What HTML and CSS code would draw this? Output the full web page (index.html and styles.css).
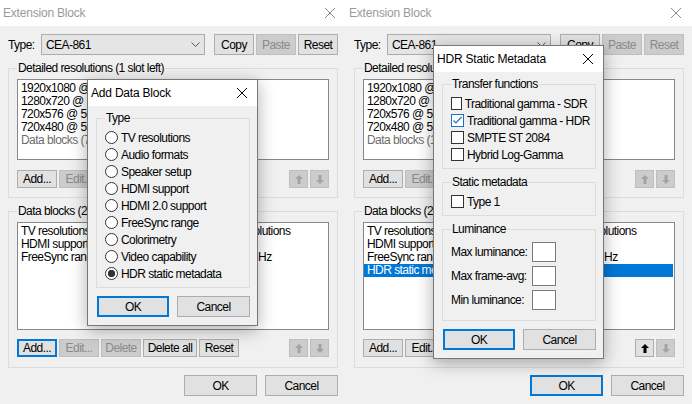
FILE: index.html
```html
<!DOCTYPE html>
<html lang="en">

<head>
    <meta charset="UTF-8">
    <title>Extension Block</title>
    <link rel="stylesheet" href="styles.css">
</head>

<body>
    <div class="screen">

        <!-- Left: Extension Block with Add Data Block on top -->
        <div class="window">
            <div class="titlebar inactive">
                <span>Extension Block</span>
                <svg class="close" width="10" height="10" viewBox="0 0 10 10"><path d="M0 0L10 10M10 0L0 10" /></svg>
            </div>
            <div class="client">
                <div class="type-row">
                    <span class="label">Type:</span>
                    <div class="combo">
                        <span>CEA-861</span>
                        <svg width="9" height="5" viewBox="0 0 9 5"><path d="M0.5 0.5L4.5 4.5L8.5 0.5" /></svg>
                    </div>
                    <div class="top-buttons">
                        <button>Copy</button>
                        <button disabled>Paste</button>
                        <button>Reset</button>
                    </div>
                </div>

                <fieldset class="group">
                    <legend>Detailed resolutions (1 slot left)</legend>
                    <div class="listbox list-detailed">
                        <div class="item">1920x1080 @ 60 Hz</div>
                        <div class="item">1280x720 @ 59.940 Hz</div>
                        <div class="item">720x576 @ 50 Hz</div>
                        <div class="item">720x480 @ 59.940 Hz</div>
                        <div class="item dim">Data blocks (74 bytes left)</div>
                    </div>
                    <div class="btn-row">
                        <button>Add...</button>
                        <button disabled>Edit...</button>
                        <span class="spacer"></span>
                        <button class="arrow" disabled><svg width="8" height="9" viewBox="0 0 8 9"><path d="M4 0L8 4H5.5V9H2.5V4H0Z" /></svg></button>
                        <button class="arrow" disabled><svg width="8" height="9" viewBox="0 0 8 9"><path d="M4 9L8 5H5.5V0H2.5V5H0Z" /></svg></button>
                    </div>
                </fieldset>

                <fieldset class="group blocks">
                    <legend>Data blocks (26 bytes used)</legend>
                    <div class="listbox list-blocks">
                        <div class="item">TV resolutions: 13 native, 1080p, 720p, 480p resolutions</div>
                        <div class="item">HDMI support: 30/36-bit color, 300 MHz</div>
                        <div class="item">FreeSync range: minimum 48 Hz, maximum 144 Hz</div>
                    </div>
                    <div class="btn-row">
                        <button class="focus">Add...</button>
                        <button disabled>Edit...</button>
                        <button disabled>Delete</button>
                        <button class="wide">Delete all</button>
                        <button>Reset</button>
                        <span class="spacer"></span>
                        <button class="arrow" disabled><svg width="8" height="9" viewBox="0 0 8 9"><path d="M4 0L8 4H5.5V9H2.5V4H0Z" /></svg></button>
                        <button class="arrow" disabled><svg width="8" height="9" viewBox="0 0 8 9"><path d="M4 9L8 5H5.5V0H2.5V5H0Z" /></svg></button>
                    </div>
                </fieldset>

                <div class="footer">
                    <button>OK</button>
                    <button>Cancel</button>
                </div>
            </div>

            <div class="dialog add-dialog">
                <div class="titlebar">
                    <span>Add Data Block</span>
                    <svg class="close" width="10" height="10" viewBox="0 0 10 10"><path d="M0 0L10 10M10 0L0 10" /></svg>
                </div>
                <div class="dialog-body">
                    <fieldset class="group">
                        <legend>Type</legend>
                        <div class="option"><span class="radio"></span>TV resolutions</div>
                        <div class="option"><span class="radio"></span>Audio formats</div>
                        <div class="option"><span class="radio"></span>Speaker setup</div>
                        <div class="option"><span class="radio"></span>HDMI support</div>
                        <div class="option"><span class="radio"></span>HDMI 2.0 support</div>
                        <div class="option"><span class="radio"></span>FreeSync range</div>
                        <div class="option"><span class="radio"></span>Colorimetry</div>
                        <div class="option"><span class="radio"></span>Video capability</div>
                        <div class="option"><span class="radio checked"></span>HDR static metadata</div>
                    </fieldset>
                    <div class="dlg-buttons">
                        <button class="focus">OK</button>
                        <button>Cancel</button>
                    </div>
                </div>
            </div>
        </div>

        <!-- Right: Extension Block with HDR Static Metadata on top -->
        <div class="window">
            <div class="titlebar inactive">
                <span>Extension Block</span>
                <svg class="close" width="10" height="10" viewBox="0 0 10 10"><path d="M0 0L10 10M10 0L0 10" /></svg>
            </div>
            <div class="client">
                <div class="type-row">
                    <span class="label">Type:</span>
                    <div class="combo">
                        <span>CEA-861</span>
                        <svg width="9" height="5" viewBox="0 0 9 5"><path d="M0.5 0.5L4.5 4.5L8.5 0.5" /></svg>
                    </div>
                    <div class="top-buttons">
                        <button>Copy</button>
                        <button disabled>Paste</button>
                        <button disabled>Reset</button>
                    </div>
                </div>

                <fieldset class="group">
                    <legend>Detailed resolutions (1 slot left)</legend>
                    <div class="listbox list-detailed">
                        <div class="item">1920x1080 @ 60 Hz</div>
                        <div class="item">1280x720 @ 59.940 Hz</div>
                        <div class="item">720x576 @ 50 Hz</div>
                        <div class="item">720x480 @ 59.940 Hz</div>
                        <div class="item dim">Data blocks (100 bytes left)</div>
                    </div>
                    <div class="btn-row">
                        <button>Add...</button>
                        <button disabled>Edit...</button>
                        <span class="spacer"></span>
                        <button class="arrow" disabled><svg width="8" height="9" viewBox="0 0 8 9"><path d="M4 0L8 4H5.5V9H2.5V4H0Z" /></svg></button>
                        <button class="arrow" disabled><svg width="8" height="9" viewBox="0 0 8 9"><path d="M4 9L8 5H5.5V0H2.5V5H0Z" /></svg></button>
                    </div>
                </fieldset>

                <fieldset class="group blocks">
                    <legend>Data blocks (26 bytes used)</legend>
                    <div class="listbox list-blocks">
                        <div class="item">TV resolutions: 13 native, 1080p, 720p, 480p resolutions</div>
                        <div class="item">HDMI support: 30/36-bit color, 300 MHz</div>
                        <div class="item">FreeSync range: minimum 48 Hz, maximum 144 Hz</div>
                        <div class="item selected">HDR static metadata: Traditional gamma - HDR</div>
                    </div>
                    <div class="btn-row">
                        <button>Add...</button>
                        <button>Edit...</button>
                        <button>Delete</button>
                        <button class="wide">Delete all</button>
                        <button>Reset</button>
                        <span class="spacer"></span>
                        <button class="arrow"><svg width="8" height="9" viewBox="0 0 8 9"><path d="M4 0L8 4H5.5V9H2.5V4H0Z" /></svg></button>
                        <button class="arrow" disabled><svg width="8" height="9" viewBox="0 0 8 9"><path d="M4 9L8 5H5.5V0H2.5V5H0Z" /></svg></button>
                    </div>
                </fieldset>

                <div class="footer">
                    <button class="focus">OK</button>
                    <button>Cancel</button>
                </div>
            </div>

            <div class="dialog hdr-dialog">
                <div class="titlebar">
                    <span>HDR Static Metadata</span>
                    <svg class="close" width="10" height="10" viewBox="0 0 10 10"><path d="M0 0L10 10M10 0L0 10" /></svg>
                </div>
                <div class="dialog-body">
                    <fieldset class="group">
                        <legend>Transfer functions</legend>
                        <div class="option"><span class="check"></span>Traditional gamma - SDR</div>
                        <div class="option"><span class="check checked"><svg width="11" height="11" viewBox="0 0 11 11"><path d="M1.5 5.5L4 8L9.5 2" /></svg></span>Traditional gamma - HDR</div>
                        <div class="option"><span class="check"></span>SMPTE ST 2084</div>
                        <div class="option"><span class="check"></span>Hybrid Log-Gamma</div>
                    </fieldset>
                    <fieldset class="group">
                        <legend>Static metadata</legend>
                        <div class="option"><span class="check"></span>Type 1</div>
                    </fieldset>
                    <fieldset class="group luminance">
                        <legend>Luminance</legend>
                        <div class="lum-grid">
                            <span>Max luminance:</span><span class="field"></span>
                            <span>Max frame-avg:</span><span class="field"></span>
                            <span>Min luminance:</span><span class="field"></span>
                        </div>
                    </fieldset>
                    <div class="dlg-buttons">
                        <button class="focus">OK</button>
                        <button>Cancel</button>
                    </div>
                </div>
            </div>
        </div>

    </div>
</body>

</html>
```

FILE: styles.css
```css
* {
    box-sizing: border-box;
}

body {
    margin: 0;
    background: #f0f0f0;
    font-family: "Liberation Sans", Arial, sans-serif;
    font-size: 12px;
    letter-spacing: -0.55px;
    color: #000;
}

.screen {
    display: flex;
    width: 692px;
    height: 404px;
}

.window {
    position: relative;
    width: 346px;
    height: 404px;
    background: #f0f0f0;
}

/* title bars */
.titlebar {
    height: 26px;
    background: #fff;
    display: flex;
    align-items: center;
    justify-content: space-between;
    padding: 0 11px 0 3px;
    letter-spacing: -0.2px;
}

.titlebar .close path {
    stroke: #000;
    stroke-width: 1;
}

.titlebar.inactive {
    color: #9a9a9a;
}

.titlebar.inactive .close path {
    stroke: #8a8a8a;
}

.client {
    padding: 8px 8px 0;
}

/* type row */
.type-row {
    display: flex;
    align-items: center;
    height: 21px;
}

.type-row .label {
    width: 33px;
}

.combo {
    width: 164px;
    height: 21px;
    background: #e5e5e5;
    border: 1px solid #acacac;
    display: flex;
    align-items: center;
    justify-content: space-between;
    padding: 0 4px 0 4px;
}

.combo path {
    fill: none;
    stroke: #555;
}

.top-buttons {
    display: flex;
    gap: 2px;
    margin-left: 9px;
}

.top-buttons button {
    width: 40px;
    height: 21px;
}

/* buttons */
button {
    font: inherit;
    letter-spacing: inherit;
    color: #000;
    background: #e1e1e1;
    border: 1px solid #adadad;
    padding: 0;
    margin: 0;
}

button:disabled {
    background: #cccccc;
    border-color: #bfbfbf;
    color: #8a8a8a;
}

button.focus {
    border: 2px solid #0078d7;
}

/* group boxes */
fieldset.group {
    margin: 6px 0 0;
    padding: 4px 8px 9px;
    border: 1px solid #dcdcdc;
    min-width: 0;
}

fieldset.group legend {
    padding: 0 1px;
    line-height: 14px;
}

fieldset.blocks {
    padding-bottom: 10px;
}

.listbox {
    background: #fff;
    border: 1px solid #828790;
    padding: 2px 1px 2px 0;
    overflow: hidden;
}

.list-detailed {
    height: 81px;
}

.list-blocks {
    height: 108px;
}

.item {
    height: 13px;
    line-height: 13px;
    padding-left: 3px;
    white-space: nowrap;
}

.item.dim {
    color: #6d6d6d;
}

.item.selected {
    background: #0078d7;
    color: #fff;
}

.btn-row {
    display: flex;
    gap: 2px;
    margin-top: 10px;
    height: 18px;
}

.blocks .btn-row {
    margin-top: 9px;
}

.btn-row button {
    width: 40px;
    height: 18px;
}

.btn-row .wide {
    width: 54px;
}

.btn-row .spacer {
    flex: 1;
}

.btn-row .arrow {
    width: 19px;
    display: flex;
    align-items: center;
    justify-content: center;
}

.arrow path {
    fill: currentColor;
}

.arrow:disabled {
    color: #a3a3a3;
}

.footer {
    display: flex;
    justify-content: flex-end;
    gap: 8px;
    margin-top: 7px;
}

.footer button {
    width: 73px;
    height: 21px;
}

/* modal dialogs */
.dialog {
    position: absolute;
    left: 87px;
    width: 171px;
    background: #f0f0f0;
    border: 1px solid #777;
    box-shadow: 0 4px 16px rgba(0, 0, 0, 0.32);
}

.add-dialog {
    top: 79px;
}

.hdr-dialog {
    top: 45px;
}

.dialog .titlebar {
    padding: 0 10px 0 3px;
}

.dialog-body {
    padding: 5px 7px 8px 8px;
}

.dialog-body fieldset.group {
    padding: 4px 8px 5px;
}

.dialog-body fieldset.group:first-child {
    margin-top: 0;
}

.dialog-body fieldset.luminance {
    padding: 6px 8px 10px;
}

.option {
    display: flex;
    align-items: center;
    gap: 3px;
    height: 17px;
    white-space: nowrap;
}

.radio {
    width: 13px;
    height: 13px;
    border: 1px solid #333;
    border-radius: 50%;
    background: #fff;
}

.radio.checked {
    background: radial-gradient(circle, #333 0 3.4px, #fff 4px);
}

.check {
    width: 13px;
    height: 13px;
    border: 1px solid #333;
    background: #fff;
    display: flex;
    align-items: center;
    justify-content: center;
}

.check.checked {
    border-color: #1a73c8;
}

.check path {
    fill: none;
    stroke: #1a73c8;
    stroke-width: 1.2;
}

.lum-grid {
    display: grid;
    grid-template-columns: 81px 24px;
    row-gap: 4px;
    align-items: center;
}

.lum-grid .field {
    height: 20px;
    background: #fff;
    border: 1px solid #7a7a7a;
}

.dlg-buttons {
    display: flex;
    gap: 8px;
    margin-top: 8px;
    padding-left: 1px;
}

.dlg-buttons button {
    width: 72px;
    height: 21px;
}

.dlg-buttons button + button {
    width: 73px;
}
```
